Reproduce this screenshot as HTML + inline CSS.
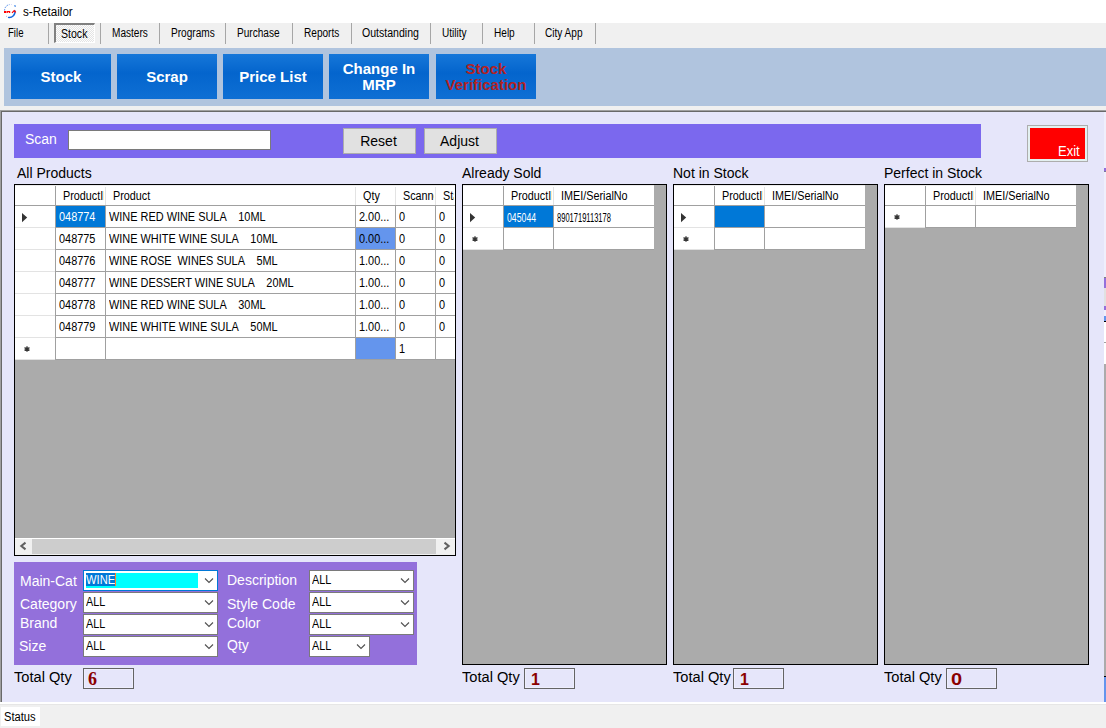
<!DOCTYPE html><html><head><meta charset="utf-8"><style>
html,body{margin:0;padding:0;}
body{width:1106px;height:728px;overflow:hidden;position:relative;background:#f0f0f0;font-family:"Liberation Sans",sans-serif;}
.t{position:absolute;white-space:pre;line-height:1;transform-origin:0 0;}
.m{font-size:12px;color:#000;transform:scaleX(0.84);}
.h{font-size:12px;color:#000;transform:scaleX(0.9);}
.c{font-size:12px;color:#000;transform:scaleX(0.91);}
.n{font-size:13px;transform:scaleX(0.67);}
.l{font-size:14px;color:#000;}
.w{font-size:14px;color:#fff;}
.cb{font-size:12px;color:#000;transform:scaleX(0.9);}
</style></head><body>
<div style="position:absolute;left:0px;top:0px;width:1106px;height:23px;background:#fff"></div>
<svg style="position:absolute;left:0;top:0" width="22" height="22" viewBox="0 0 22 22">
<path d="M4.6 10.5A5.8 5.8 0 0 1 9.5 4.6" fill="none" stroke="#4a86e8" stroke-width="1" stroke-dasharray="1.5 1"/>
<path d="M11.5 4.5L12 4.6" stroke="#b9b9f5" stroke-width="1"/>
<path d="M14.5 5.5L15.6 6.5" stroke="#1a6fe0" stroke-width="1.2"/>
<path d="M14.8 10.3A5.8 5.8 0 0 1 8 17.4" fill="none" stroke="#1266dd" stroke-width="1.4"/>
<path d="M6.3 16.2L6.8 16.6" stroke="#4a86e8" stroke-width="1"/>
<rect x="4" y="11" width="2.2" height="2" fill="#f00"/>
<path d="M7.2 13V11.6H9.6V13" stroke="#f00" stroke-width="1.2" fill="none"/>
<path d="M12 12.8L14.2 10.6L15.8 12.4" stroke="#f00" stroke-width="1.2" fill="none"/>
</svg>
<div class="t" style="left:23px;top:6px;font-size:12.5px;color:#000;transform:scaleX(0.93)">s-Retailor</div>
<div style="position:absolute;left:0px;top:23px;width:1106px;height:25px;background:#f0f0f0"></div>
<div style="position:absolute;left:54px;top:23px;width:41px;height:20px;box-sizing:border-box;border-top:2px solid #808080;border-left:2px solid #808080;border-right:1px solid #fff;border-bottom:1px solid #fff;background:repeating-conic-gradient(#fdfdfd 0 25%,#e4e4e4 0 50%) 0 0/2px 2px"></div>
<div class="t m" style="left:8px;top:27px;transform:scaleX(0.8)">File</div>
<div class="t m" style="left:61px;top:28px;transform:scaleX(0.88)">Stock</div>
<div class="t m" style="left:112px;top:27px">Masters</div>
<div class="t m" style="left:171px;top:27px">Programs</div>
<div class="t m" style="left:237px;top:27px">Purchase</div>
<div class="t m" style="left:304px;top:27px">Reports</div>
<div class="t m" style="left:362px;top:27px;transform:scaleX(0.88)">Outstanding</div>
<div class="t m" style="left:442px;top:27px">Utility</div>
<div class="t m" style="left:494px;top:27px">Help</div>
<div class="t m" style="left:545px;top:27px">City App</div>
<div style="position:absolute;left:48px;top:23px;width:1px;height:21px;background:#a6a6a6"></div>
<div style="position:absolute;left:100px;top:23px;width:1px;height:21px;background:#a6a6a6"></div>
<div style="position:absolute;left:159px;top:23px;width:1px;height:21px;background:#a6a6a6"></div>
<div style="position:absolute;left:225px;top:23px;width:1px;height:21px;background:#a6a6a6"></div>
<div style="position:absolute;left:292px;top:23px;width:1px;height:21px;background:#a6a6a6"></div>
<div style="position:absolute;left:351px;top:23px;width:1px;height:21px;background:#a6a6a6"></div>
<div style="position:absolute;left:430px;top:23px;width:1px;height:21px;background:#a6a6a6"></div>
<div style="position:absolute;left:482px;top:23px;width:1px;height:21px;background:#a6a6a6"></div>
<div style="position:absolute;left:534px;top:23px;width:1px;height:21px;background:#a6a6a6"></div>
<div style="position:absolute;left:595px;top:23px;width:1px;height:21px;background:#a6a6a6"></div>
<div style="position:absolute;left:4px;top:48px;width:1102px;height:58px;background:#b0c4de"></div>
<div style="position:absolute;left:11px;top:54px;width:100px;height:45px;background:linear-gradient(#1677d9,#0465cd 42%,#0e6fd4);display:flex;align-items:center;justify-content:center;text-align:center;color:#fff;font-weight:bold;font-size:15px;line-height:16px">Stock</div>
<div style="position:absolute;left:117px;top:54px;width:100px;height:45px;background:linear-gradient(#1677d9,#0465cd 42%,#0e6fd4);display:flex;align-items:center;justify-content:center;text-align:center;color:#fff;font-weight:bold;font-size:15px;line-height:16px">Scrap</div>
<div style="position:absolute;left:223px;top:54px;width:100px;height:45px;background:linear-gradient(#1677d9,#0465cd 42%,#0e6fd4);display:flex;align-items:center;justify-content:center;text-align:center;color:#fff;font-weight:bold;font-size:15px;line-height:16px">Price List</div>
<div style="position:absolute;left:329px;top:54px;width:100px;height:45px;background:linear-gradient(#1677d9,#0465cd 42%,#0e6fd4);display:flex;align-items:center;justify-content:center;text-align:center;color:#fff;font-weight:bold;font-size:15px;line-height:16px">Change In<br>MRP</div>
<div style="position:absolute;left:436px;top:54px;width:100px;height:45px;background:linear-gradient(#1677d9,#0465cd 42%,#0e6fd4);display:flex;align-items:center;justify-content:center;text-align:center;color:#b22222;font-weight:bold;font-size:15px;line-height:16px">Stock<br>Verification</div>
<div style="position:absolute;left:0px;top:110px;width:1106px;height:594px;background:#e6e6fa;box-sizing:border-box;border-top:1px solid #a0a0a0;border-left:1px solid #a0a0a0"></div>
<div style="position:absolute;left:1px;top:111px;width:1105px;height:1px;background:#696969"></div>
<div style="position:absolute;left:1px;top:111px;width:1px;height:592px;background:#696969"></div>
<div style="position:absolute;left:0px;top:702px;width:1106px;height:2px;background:#fff"></div>
<div style="position:absolute;left:1104px;top:112px;width:2px;height:590px;background:#efeffc"></div>
<div style="position:absolute;left:1104px;top:168px;width:2px;height:3px;background:#9370db"></div>
<div style="position:absolute;left:1104px;top:171px;width:2px;height:1px;background:#7a7a9a"></div>
<div style="position:absolute;left:1104px;top:277px;width:2px;height:1px;background:#808080"></div>
<div style="position:absolute;left:1104px;top:278px;width:2px;height:10px;background:#9370db"></div>
<div style="position:absolute;left:1104px;top:288px;width:2px;height:18px;background:#e1e1e1"></div>
<div style="position:absolute;left:1104px;top:306px;width:2px;height:4px;background:#9370db"></div>
<div style="position:absolute;left:1104px;top:316px;width:2px;height:5px;background:#6495ed"></div>
<div style="position:absolute;left:1104px;top:321px;width:2px;height:1px;background:#000"></div>
<div style="position:absolute;left:1104px;top:322px;width:2px;height:42px;background:#fff"></div>
<div style="position:absolute;left:1104px;top:342px;width:2px;height:1px;background:#a0a0a0"></div>
<div style="position:absolute;left:1104px;top:364px;width:2px;height:312px;background:#ababab"></div>
<div style="position:absolute;left:1104px;top:676px;width:2px;height:1px;background:#000"></div>
<div style="position:absolute;left:1104px;top:677px;width:2px;height:25px;background:#6495ed"></div>
<div style="position:absolute;left:14px;top:124px;width:967px;height:34px;background:#7b68ee"></div>
<div class="t" style="left:25px;top:132px;font-size:14px;color:#fff">Scan</div>
<div style="position:absolute;left:68px;top:130px;width:203px;height:20px;box-sizing:border-box;background:#fff;border:1px solid #7a7a7a"></div>
<div style="position:absolute;left:343px;top:128px;width:73px;height:26px;box-sizing:border-box;background:#e1e1e1;border:1px solid #adadad;font-size:14px;line-height:24px;text-align:center;color:#000;padding-right:2px">Reset</div>
<div style="position:absolute;left:424px;top:128px;width:73px;height:26px;box-sizing:border-box;background:#e1e1e1;border:1px solid #adadad;font-size:14px;line-height:24px;text-align:center;color:#000;padding-right:2px">Adjust</div>
<div style="position:absolute;left:1027px;top:125px;width:61px;height:37px;box-sizing:border-box;border:1px solid #adadad;background:#f00;box-shadow:inset 0 0 0 2px #e3f0f0"></div>
<div class="t" style="left:1058px;top:144px;font-size:14px;color:#fff;transform:scaleX(0.93)">Exit</div>
<div class="t l" style="left:17px;top:166px">All Products</div>
<div class="t l" style="left:462px;top:166px">Already Sold</div>
<div class="t l" style="left:673px;top:166px">Not in Stock</div>
<div class="t l" style="left:884px;top:166px">Perfect in Stock</div>
<div style="position:absolute;left:14px;top:184px;width:442px;height:372px;box-sizing:border-box;border:1px solid #000;background:#ababab"></div>
<div style="position:absolute;left:15px;top:185px;width:440px;height:20px;background:#fff"></div>
<div style="position:absolute;left:15px;top:206px;width:440px;height:154px;background:#fff"></div>
<div style="position:absolute;left:15px;top:205px;width:440px;height:1px;background:#a0a0a0"></div>
<div style="position:absolute;left:15px;top:185px;width:440px;height:1px;background:#ececec"></div>
<div style="position:absolute;left:55px;top:187px;width:1px;height:18px;background:#e3e3e3"></div>
<div style="position:absolute;left:55px;top:206px;width:1px;height:154px;background:#a0a0a0"></div>
<div style="position:absolute;left:105px;top:187px;width:1px;height:18px;background:#e3e3e3"></div>
<div style="position:absolute;left:105px;top:206px;width:1px;height:154px;background:#a0a0a0"></div>
<div style="position:absolute;left:355px;top:187px;width:1px;height:18px;background:#e3e3e3"></div>
<div style="position:absolute;left:355px;top:206px;width:1px;height:154px;background:#a0a0a0"></div>
<div style="position:absolute;left:395px;top:187px;width:1px;height:18px;background:#e3e3e3"></div>
<div style="position:absolute;left:395px;top:206px;width:1px;height:154px;background:#a0a0a0"></div>
<div style="position:absolute;left:435px;top:187px;width:1px;height:18px;background:#e3e3e3"></div>
<div style="position:absolute;left:435px;top:206px;width:1px;height:154px;background:#a0a0a0"></div>
<div style="position:absolute;left:55px;top:186px;width:1px;height:19px;background:#a0a0a0"></div>
<div style="position:absolute;left:15px;top:227px;width:40px;height:1px;background:#e3e3e3"></div>
<div style="position:absolute;left:56px;top:227px;width:399px;height:1px;background:#a0a0a0"></div>
<div style="position:absolute;left:15px;top:249px;width:40px;height:1px;background:#e3e3e3"></div>
<div style="position:absolute;left:56px;top:249px;width:399px;height:1px;background:#a0a0a0"></div>
<div style="position:absolute;left:15px;top:271px;width:40px;height:1px;background:#e3e3e3"></div>
<div style="position:absolute;left:56px;top:271px;width:399px;height:1px;background:#a0a0a0"></div>
<div style="position:absolute;left:15px;top:293px;width:40px;height:1px;background:#e3e3e3"></div>
<div style="position:absolute;left:56px;top:293px;width:399px;height:1px;background:#a0a0a0"></div>
<div style="position:absolute;left:15px;top:315px;width:40px;height:1px;background:#e3e3e3"></div>
<div style="position:absolute;left:56px;top:315px;width:399px;height:1px;background:#a0a0a0"></div>
<div style="position:absolute;left:15px;top:337px;width:40px;height:1px;background:#e3e3e3"></div>
<div style="position:absolute;left:56px;top:337px;width:399px;height:1px;background:#a0a0a0"></div>
<div style="position:absolute;left:15px;top:359px;width:40px;height:1px;background:#e3e3e3"></div>
<div style="position:absolute;left:56px;top:359px;width:399px;height:1px;background:#a0a0a0"></div>
<div style="position:absolute;left:56px;top:185px;width:48px;height:20px;overflow:hidden"><div class="t h" style="left:7px;top:5px">ProductID</div></div>
<div style="position:absolute;left:106px;top:185px;width:249px;height:20px;overflow:hidden"><div class="t h" style="left:7px;top:5px">Product</div></div>
<div style="position:absolute;left:356px;top:185px;width:38px;height:20px;overflow:hidden"><div class="t h" style="left:7px;top:5px">Qty</div></div>
<div style="position:absolute;left:396px;top:185px;width:38px;height:20px;overflow:hidden"><div class="t h" style="left:7px;top:5px">Scanned</div></div>
<div style="position:absolute;left:436px;top:185px;width:18px;height:20px;overflow:hidden"><div class="t h" style="left:7px;top:5px">Status</div></div>
<div style="position:absolute;left:56px;top:206px;width:49px;height:21px;background:#0078d7"></div>
<div class="t c" style="left:59px;top:211px;color:#fff">048774</div>
<div class="t c" style="left:109px;top:211px">WINE RED WINE SULA    10ML</div>
<div class="t c" style="left:359px;top:211px">2.00...</div>
<div class="t c" style="left:399px;top:211px">0</div>
<div class="t c" style="left:439px;top:211px">0</div>
<div style="position:absolute;left:356px;top:228px;width:39px;height:21px;background:#6495ed"></div>
<div class="t c" style="left:59px;top:233px;">048775</div>
<div class="t c" style="left:109px;top:233px">WINE WHITE WINE SULA    10ML</div>
<div class="t c" style="left:359px;top:233px">0.00...</div>
<div class="t c" style="left:399px;top:233px">0</div>
<div class="t c" style="left:439px;top:233px">0</div>
<div class="t c" style="left:59px;top:255px;">048776</div>
<div class="t c" style="left:109px;top:255px">WINE ROSE  WINES SULA    5ML</div>
<div class="t c" style="left:359px;top:255px">1.00...</div>
<div class="t c" style="left:399px;top:255px">0</div>
<div class="t c" style="left:439px;top:255px">0</div>
<div class="t c" style="left:59px;top:277px;">048777</div>
<div class="t c" style="left:109px;top:277px">WINE DESSERT WINE SULA    20ML</div>
<div class="t c" style="left:359px;top:277px">1.00...</div>
<div class="t c" style="left:399px;top:277px">0</div>
<div class="t c" style="left:439px;top:277px">0</div>
<div class="t c" style="left:59px;top:299px;">048778</div>
<div class="t c" style="left:109px;top:299px">WINE RED WINE SULA    30ML</div>
<div class="t c" style="left:359px;top:299px">1.00...</div>
<div class="t c" style="left:399px;top:299px">0</div>
<div class="t c" style="left:439px;top:299px">0</div>
<div class="t c" style="left:59px;top:321px;">048779</div>
<div class="t c" style="left:109px;top:321px">WINE WHITE WINE SULA    50ML</div>
<div class="t c" style="left:359px;top:321px">1.00...</div>
<div class="t c" style="left:399px;top:321px">0</div>
<div class="t c" style="left:439px;top:321px">0</div>
<svg style="position:absolute;left:22px;top:213px" width="6" height="10" viewBox="0 0 6 10"><path d="M0 0L5.2 4.6L0 9.2z" fill="#333"/></svg>
<div style="position:absolute;left:356px;top:338px;width:39px;height:21px;background:#6495ed"></div>
<svg style="position:absolute;left:23px;top:345px" width="8" height="8" viewBox="0 0 8 8"><path d="M4 1.2V6.8M1.5 2.6L6.5 5.4M1.5 5.4L6.5 2.6" stroke="#3a3a3a" stroke-width="1.3"/><circle cx="4" cy="4" r="1.6" fill="#333"/></svg>
<div class="t c" style="left:399px;top:343px">1</div>
<div style="position:absolute;left:15px;top:538px;width:440px;height:17px;background:#f0f0f0"></div>
<div style="position:absolute;left:15px;top:538px;width:440px;height:1px;background:#fff"></div>
<div style="position:absolute;left:32px;top:539px;width:404px;height:15px;background:#cdcdcd"></div>
<svg style="position:absolute;left:19px;top:541px" width="10" height="10" viewBox="0 0 10 10"><path d="M6.5 1.6L2.3 5L6.5 8.4" stroke="#606060" stroke-width="2" fill="none"/></svg>
<svg style="position:absolute;left:441px;top:541px" width="10" height="10" viewBox="0 0 10 10"><path d="M3.5 1.6L7.7 5L3.5 8.4" stroke="#606060" stroke-width="2" fill="none"/></svg>
<div style="position:absolute;left:462px;top:184px;width:205px;height:481px;box-sizing:border-box;border:1px solid #000;background:#ababab"></div>
<div style="position:absolute;left:463px;top:185px;width:191px;height:20px;background:#fff"></div>
<div style="position:absolute;left:463px;top:205px;width:191px;height:1px;background:#a0a0a0"></div>
<div style="position:absolute;left:463px;top:185px;width:191px;height:1px;background:#ececec"></div>
<div style="position:absolute;left:503px;top:186px;width:1px;height:19px;background:#a0a0a0"></div>
<div style="position:absolute;left:553px;top:187px;width:1px;height:18px;background:#e3e3e3"></div>
<div style="position:absolute;left:504px;top:185px;width:48px;height:20px;overflow:hidden"><div class="t h" style="left:7px;top:5px">ProductID</div></div>
<div style="position:absolute;left:554px;top:185px;width:100px;height:20px;overflow:hidden"><div class="t h" style="left:7px;top:5px">IMEI/SerialNo</div></div>
<div style="position:absolute;left:463px;top:206px;width:191px;height:44px;background:#fff"></div>
<div style="position:absolute;left:503px;top:206px;width:1px;height:44px;background:#a0a0a0"></div>
<div style="position:absolute;left:553px;top:206px;width:1px;height:44px;background:#a0a0a0"></div>
<div style="position:absolute;left:463px;top:227px;width:40px;height:1px;background:#e3e3e3"></div>
<div style="position:absolute;left:504px;top:227px;width:150px;height:1px;background:#a0a0a0"></div>
<div style="position:absolute;left:463px;top:249px;width:40px;height:1px;background:#e3e3e3"></div>
<div style="position:absolute;left:504px;top:249px;width:150px;height:1px;background:#a0a0a0"></div>
<div style="position:absolute;left:504px;top:206px;width:49px;height:21px;background:#0078d7"></div>
<div class="t n" style="left:507px;top:211px;color:#fff">045044</div>
<div class="t n" style="left:557px;top:211px;color:#000;transform:scaleX(0.58)">8901719113178</div>
<svg style="position:absolute;left:470px;top:213px" width="6" height="10" viewBox="0 0 6 10"><path d="M0 0L5.2 4.6L0 9.2z" fill="#333"/></svg>
<svg style="position:absolute;left:471px;top:235px" width="8" height="8" viewBox="0 0 8 8"><path d="M4 1.2V6.8M1.5 2.6L6.5 5.4M1.5 5.4L6.5 2.6" stroke="#3a3a3a" stroke-width="1.3"/><circle cx="4" cy="4" r="1.6" fill="#333"/></svg>
<div style="position:absolute;left:673px;top:184px;width:205px;height:481px;box-sizing:border-box;border:1px solid #000;background:#ababab"></div>
<div style="position:absolute;left:674px;top:185px;width:191px;height:20px;background:#fff"></div>
<div style="position:absolute;left:674px;top:205px;width:191px;height:1px;background:#a0a0a0"></div>
<div style="position:absolute;left:674px;top:185px;width:191px;height:1px;background:#ececec"></div>
<div style="position:absolute;left:714px;top:186px;width:1px;height:19px;background:#a0a0a0"></div>
<div style="position:absolute;left:764px;top:187px;width:1px;height:18px;background:#e3e3e3"></div>
<div style="position:absolute;left:715px;top:185px;width:48px;height:20px;overflow:hidden"><div class="t h" style="left:7px;top:5px">ProductID</div></div>
<div style="position:absolute;left:765px;top:185px;width:100px;height:20px;overflow:hidden"><div class="t h" style="left:7px;top:5px">IMEI/SerialNo</div></div>
<div style="position:absolute;left:674px;top:206px;width:191px;height:44px;background:#fff"></div>
<div style="position:absolute;left:714px;top:206px;width:1px;height:44px;background:#a0a0a0"></div>
<div style="position:absolute;left:764px;top:206px;width:1px;height:44px;background:#a0a0a0"></div>
<div style="position:absolute;left:674px;top:227px;width:40px;height:1px;background:#e3e3e3"></div>
<div style="position:absolute;left:715px;top:227px;width:150px;height:1px;background:#a0a0a0"></div>
<div style="position:absolute;left:674px;top:249px;width:40px;height:1px;background:#e3e3e3"></div>
<div style="position:absolute;left:715px;top:249px;width:150px;height:1px;background:#a0a0a0"></div>
<div style="position:absolute;left:715px;top:206px;width:49px;height:21px;background:#0078d7"></div>
<svg style="position:absolute;left:681px;top:213px" width="6" height="10" viewBox="0 0 6 10"><path d="M0 0L5.2 4.6L0 9.2z" fill="#333"/></svg>
<svg style="position:absolute;left:682px;top:235px" width="8" height="8" viewBox="0 0 8 8"><path d="M4 1.2V6.8M1.5 2.6L6.5 5.4M1.5 5.4L6.5 2.6" stroke="#3a3a3a" stroke-width="1.3"/><circle cx="4" cy="4" r="1.6" fill="#333"/></svg>
<div style="position:absolute;left:884px;top:184px;width:205px;height:481px;box-sizing:border-box;border:1px solid #000;background:#ababab"></div>
<div style="position:absolute;left:885px;top:185px;width:191px;height:20px;background:#fff"></div>
<div style="position:absolute;left:885px;top:205px;width:191px;height:1px;background:#a0a0a0"></div>
<div style="position:absolute;left:885px;top:185px;width:191px;height:1px;background:#ececec"></div>
<div style="position:absolute;left:925px;top:186px;width:1px;height:19px;background:#a0a0a0"></div>
<div style="position:absolute;left:975px;top:187px;width:1px;height:18px;background:#e3e3e3"></div>
<div style="position:absolute;left:926px;top:185px;width:48px;height:20px;overflow:hidden"><div class="t h" style="left:7px;top:5px">ProductID</div></div>
<div style="position:absolute;left:976px;top:185px;width:100px;height:20px;overflow:hidden"><div class="t h" style="left:7px;top:5px">IMEI/SerialNo</div></div>
<div style="position:absolute;left:885px;top:206px;width:191px;height:22px;background:#fff"></div>
<div style="position:absolute;left:925px;top:206px;width:1px;height:22px;background:#a0a0a0"></div>
<div style="position:absolute;left:975px;top:206px;width:1px;height:22px;background:#a0a0a0"></div>
<div style="position:absolute;left:885px;top:227px;width:40px;height:1px;background:#e3e3e3"></div>
<div style="position:absolute;left:926px;top:227px;width:150px;height:1px;background:#a0a0a0"></div>
<svg style="position:absolute;left:893px;top:213px" width="8" height="8" viewBox="0 0 8 8"><path d="M4 1.2V6.8M1.5 2.6L6.5 5.4M1.5 5.4L6.5 2.6" stroke="#3a3a3a" stroke-width="1.3"/><circle cx="4" cy="4" r="1.6" fill="#333"/></svg>
<div style="position:absolute;left:14px;top:562px;width:403px;height:103px;background:#9370db"></div>
<div class="t w" style="left:20px;top:574px">Main-Cat</div>
<div class="t w" style="left:20px;top:597px">Category</div>
<div class="t w" style="left:20px;top:616px">Brand</div>
<div class="t w" style="left:19px;top:639px">Size</div>
<div class="t w" style="left:227px;top:573px">Description</div>
<div class="t w" style="left:227px;top:597px">Style Code</div>
<div class="t w" style="left:227px;top:616px">Color</div>
<div class="t w" style="left:227px;top:638px">Qty</div>
<div style="position:absolute;left:83px;top:570px;width:135px;height:21px;box-sizing:border-box;border:1px solid #0078d7;background:#fff"></div>
<svg style="position:absolute;left:204px;top:577px" width="10" height="7" viewBox="0 0 10 7"><path d="M1 1.5L5 5.5L9 1.5" stroke="#505050" stroke-width="1.1" fill="none"/></svg>
<div style="position:absolute;left:86px;top:573px;width:112px;height:15px;background:#00ffff"></div>
<div style="position:absolute;left:86px;top:573px;width:29px;height:13px;background:#0078d7"></div>
<div style="position:absolute;left:115px;top:573px;width:1px;height:13px;background:#ff7f27"></div>
<div class="t cb" style="left:86px;top:574px;color:#fff;transform:scaleX(0.93)">WINE</div>
<div style="position:absolute;left:83px;top:592px;width:135px;height:21px;box-sizing:border-box;border:1px solid #7a7a7a;background:#fff"></div>
<svg style="position:absolute;left:204px;top:599px" width="10" height="7" viewBox="0 0 10 7"><path d="M1 1.5L5 5.5L9 1.5" stroke="#505050" stroke-width="1.1" fill="none"/></svg>
<div class="t cb" style="left:86px;top:596px">ALL</div>
<div style="position:absolute;left:83px;top:614px;width:135px;height:21px;box-sizing:border-box;border:1px solid #7a7a7a;background:#fff"></div>
<svg style="position:absolute;left:204px;top:621px" width="10" height="7" viewBox="0 0 10 7"><path d="M1 1.5L5 5.5L9 1.5" stroke="#505050" stroke-width="1.1" fill="none"/></svg>
<div class="t cb" style="left:86px;top:618px">ALL</div>
<div style="position:absolute;left:83px;top:636px;width:135px;height:21px;box-sizing:border-box;border:1px solid #7a7a7a;background:#fff"></div>
<svg style="position:absolute;left:204px;top:643px" width="10" height="7" viewBox="0 0 10 7"><path d="M1 1.5L5 5.5L9 1.5" stroke="#505050" stroke-width="1.1" fill="none"/></svg>
<div class="t cb" style="left:86px;top:640px">ALL</div>
<div style="position:absolute;left:309px;top:570px;width:105px;height:21px;box-sizing:border-box;border:1px solid #7a7a7a;background:#fff"></div>
<svg style="position:absolute;left:400px;top:577px" width="10" height="7" viewBox="0 0 10 7"><path d="M1 1.5L5 5.5L9 1.5" stroke="#505050" stroke-width="1.1" fill="none"/></svg>
<div class="t cb" style="left:312px;top:574px">ALL</div>
<div style="position:absolute;left:309px;top:592px;width:105px;height:21px;box-sizing:border-box;border:1px solid #7a7a7a;background:#fff"></div>
<svg style="position:absolute;left:400px;top:599px" width="10" height="7" viewBox="0 0 10 7"><path d="M1 1.5L5 5.5L9 1.5" stroke="#505050" stroke-width="1.1" fill="none"/></svg>
<div class="t cb" style="left:312px;top:596px">ALL</div>
<div style="position:absolute;left:309px;top:614px;width:105px;height:21px;box-sizing:border-box;border:1px solid #7a7a7a;background:#fff"></div>
<svg style="position:absolute;left:400px;top:621px" width="10" height="7" viewBox="0 0 10 7"><path d="M1 1.5L5 5.5L9 1.5" stroke="#505050" stroke-width="1.1" fill="none"/></svg>
<div class="t cb" style="left:312px;top:618px">ALL</div>
<div style="position:absolute;left:309px;top:636px;width:61px;height:21px;box-sizing:border-box;border:1px solid #7a7a7a;background:#fff"></div>
<svg style="position:absolute;left:356px;top:643px" width="10" height="7" viewBox="0 0 10 7"><path d="M1 1.5L5 5.5L9 1.5" stroke="#505050" stroke-width="1.1" fill="none"/></svg>
<div class="t cb" style="left:312px;top:640px">ALL</div>
<div class="t l" style="left:14px;top:670px;transform:scaleX(1.045)">Total Qty</div>
<div style="position:absolute;left:83px;top:668px;width:51px;height:21px;box-sizing:border-box;border:1px solid #646464;box-shadow:inset 0 0 0 1px #eeeefc"></div>
<div class="t" style="left:88px;top:670px;font-family:'Liberation Serif',serif;font-weight:bold;font-size:18px;color:#8b0000">6</div>
<div class="t l" style="left:462px;top:670px;transform:scaleX(1.045)">Total Qty</div>
<div style="position:absolute;left:524px;top:668px;width:51px;height:21px;box-sizing:border-box;border:1px solid #646464;box-shadow:inset 0 0 0 1px #eeeefc"></div>
<div class="t" style="left:531px;top:672px;font-weight:bold;font-size:16px;color:#8b0000">1</div>
<div class="t l" style="left:673px;top:670px;transform:scaleX(1.045)">Total Qty</div>
<div style="position:absolute;left:733px;top:668px;width:51px;height:21px;box-sizing:border-box;border:1px solid #646464;box-shadow:inset 0 0 0 1px #eeeefc"></div>
<div class="t" style="left:740px;top:672px;font-weight:bold;font-size:16px;color:#8b0000">1</div>
<div class="t l" style="left:884px;top:670px;transform:scaleX(1.045)">Total Qty</div>
<div style="position:absolute;left:946px;top:668px;width:51px;height:21px;box-sizing:border-box;border:1px solid #646464;box-shadow:inset 0 0 0 1px #eeeefc"></div>
<div class="t" style="left:951px;top:672px;font-weight:bold;font-size:16px;color:#8b0000;transform:scaleX(1.25)">0</div>
<div style="position:absolute;left:0px;top:704px;width:1106px;height:24px;background:#f0f0f0"></div>
<div style="position:absolute;left:0px;top:704px;width:1106px;height:1px;background:#e6e6e6"></div>
<div style="position:absolute;left:1px;top:707px;width:39px;height:19px;background:#fff"></div>
<div class="t" style="left:4px;top:711px;font-size:12px;color:#000;transform:scaleX(0.93)">Status</div>
</body></html>
